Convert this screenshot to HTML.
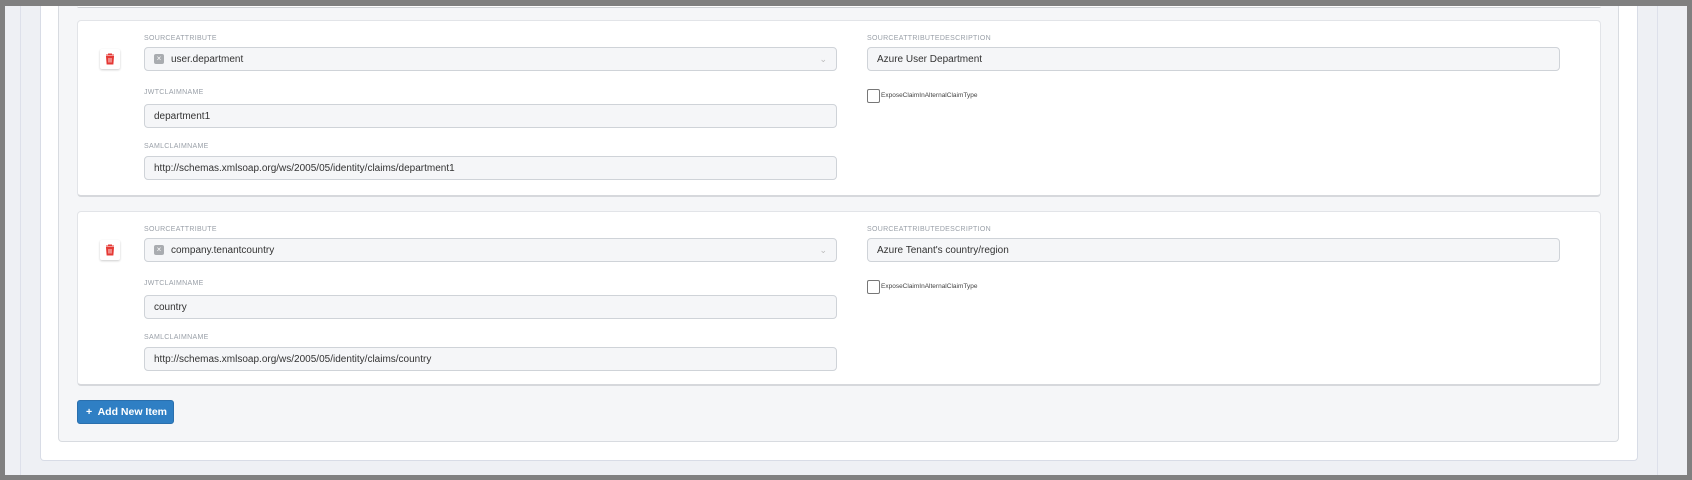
<!DOCTYPE html>
<html><head><style>
*{box-sizing:border-box;margin:0;padding:0}
body{width:1692px;height:480px;background:#808080;position:relative;overflow:hidden;font-family:"Liberation Sans",sans-serif}
.abs{position:absolute}
.lbl{position:absolute;font-size:7px;color:#9aa0a8;letter-spacing:.3px;text-transform:uppercase}
.inp{position:absolute;height:24px;background:#f5f6f8;border:1px solid #cfd3d8;border-radius:4px;font-size:10px;color:#333;line-height:23px;padding-left:9px}
.card{position:absolute;left:77px;width:1524px;background:#fff;border:1px solid #e2e4e8;border-bottom:2px solid #d6d8dc;border-radius:4px}
.trash{position:absolute;left:22px;top:28px;width:20px;height:20px;background:#fff;box-shadow:0 1px 2px rgba(0,0,0,.2);border-radius:2px}
.cb{position:absolute;width:13px;height:14px;border:1px solid #777;border-radius:2px;background:#fff}
.cbt{position:absolute;font-size:6.5px;color:#444}
</style></head><body>
<div class="abs" style="left:5px;top:6px;width:1682px;height:469px;background:#eef0f4"></div>
<div class="abs" style="left:20px;top:6px;width:1px;height:469px;background:#dde0ea"></div>
<div class="abs" style="left:1657px;top:6px;width:1px;height:469px;background:#dde0ea"></div>
<div class="abs" style="left:40px;top:6px;width:1598px;height:455px;background:#fff;border:1px solid #d8dce6;border-top:none;border-radius:0 0 4px 4px"></div>
<div class="abs" style="left:58px;top:6px;width:1561px;height:436px;background:#f5f6f8;border:1px solid #d8dbe0;border-top:none;border-radius:0 0 4px 4px"></div>
<div class="abs" style="left:77px;top:6px;width:1524px;height:2px;background:#fff;border-bottom:1px solid #cfd2d6;border-radius:0 0 4px 4px"></div>

<div class="card" style="top:20px;height:177px">
<div class="trash"><svg width="20" height="20" viewBox="0 0 20 20"><path d="M6.5 7.5h7l-.6 7.5h-5.8z M6 6h8 M8.5 6V5h3v1" fill="#e53935" stroke="#e53935" stroke-width="1"/><path d="M9 9v4.5M11 9v4.5" stroke="#fff" stroke-width=".8"/></svg></div>
<div class="lbl" style="left:66px;top:14px">SourceAttribute</div>
<div class="inp" style="left:66px;top:26px;width:693px;padding-left:26px">user.department<span class="abs" style="left:9px;top:6px;width:10px;height:10px;background:#a9acb0;border-radius:2px;color:#fff;font-size:8px;line-height:10px;text-align:center">×</span><span class="abs" style="right:9px;top:0;color:#bbb;font-size:9px">⌄</span></div>
<div class="lbl" style="left:66px;top:68px">JwtClaimName</div>
<div class="inp" style="left:66px;top:83px;width:693px">department1</div>
<div class="lbl" style="left:66px;top:122px">SamlClaimName</div>
<div class="inp" style="left:66px;top:135px;width:693px">http://schemas.xmlsoap.org/ws/2005/05/identity/claims/department1</div>
<div class="lbl" style="left:789px;top:14px">SourceAttributeDescription</div>
<div class="inp" style="left:789px;top:26px;width:693px">Azure User Department</div>
<div class="cb" style="left:789px;top:68px"></div>
<div class="cbt" style="left:803px;top:71px">ExposeClaimInAlternalClaimType</div>
</div>

<div class="card" style="top:211px;height:175px">
<div class="trash"><svg width="20" height="20" viewBox="0 0 20 20"><path d="M6.5 7.5h7l-.6 7.5h-5.8z M6 6h8 M8.5 6V5h3v1" fill="#e53935" stroke="#e53935" stroke-width="1"/><path d="M9 9v4.5M11 9v4.5" stroke="#fff" stroke-width=".8"/></svg></div>
<div class="lbl" style="left:66px;top:14px">SourceAttribute</div>
<div class="inp" style="left:66px;top:26px;width:693px;padding-left:26px">company.tenantcountry<span class="abs" style="left:9px;top:6px;width:10px;height:10px;background:#a9acb0;border-radius:2px;color:#fff;font-size:8px;line-height:10px;text-align:center">×</span><span class="abs" style="right:9px;top:0;color:#bbb;font-size:9px">⌄</span></div>
<div class="lbl" style="left:66px;top:68px">JwtClaimName</div>
<div class="inp" style="left:66px;top:83px;width:693px">country</div>
<div class="lbl" style="left:66px;top:122px">SamlClaimName</div>
<div class="inp" style="left:66px;top:135px;width:693px">http://schemas.xmlsoap.org/ws/2005/05/identity/claims/country</div>
<div class="lbl" style="left:789px;top:14px">SourceAttributeDescription</div>
<div class="inp" style="left:789px;top:26px;width:693px">Azure Tenant's country/region</div>
<div class="cb" style="left:789px;top:68px"></div>
<div class="cbt" style="left:803px;top:71px">ExposeClaimInAlternalClaimType</div>
</div>

<div class="abs" style="left:77px;top:400px;width:97px;height:24px;background:#2f7fc4;border:1px solid #2a6fad;border-radius:3px;color:#fff;font-size:10.5px;font-weight:bold;line-height:22px;padding-left:8px">+&nbsp; Add New Item</div>
</body></html>
